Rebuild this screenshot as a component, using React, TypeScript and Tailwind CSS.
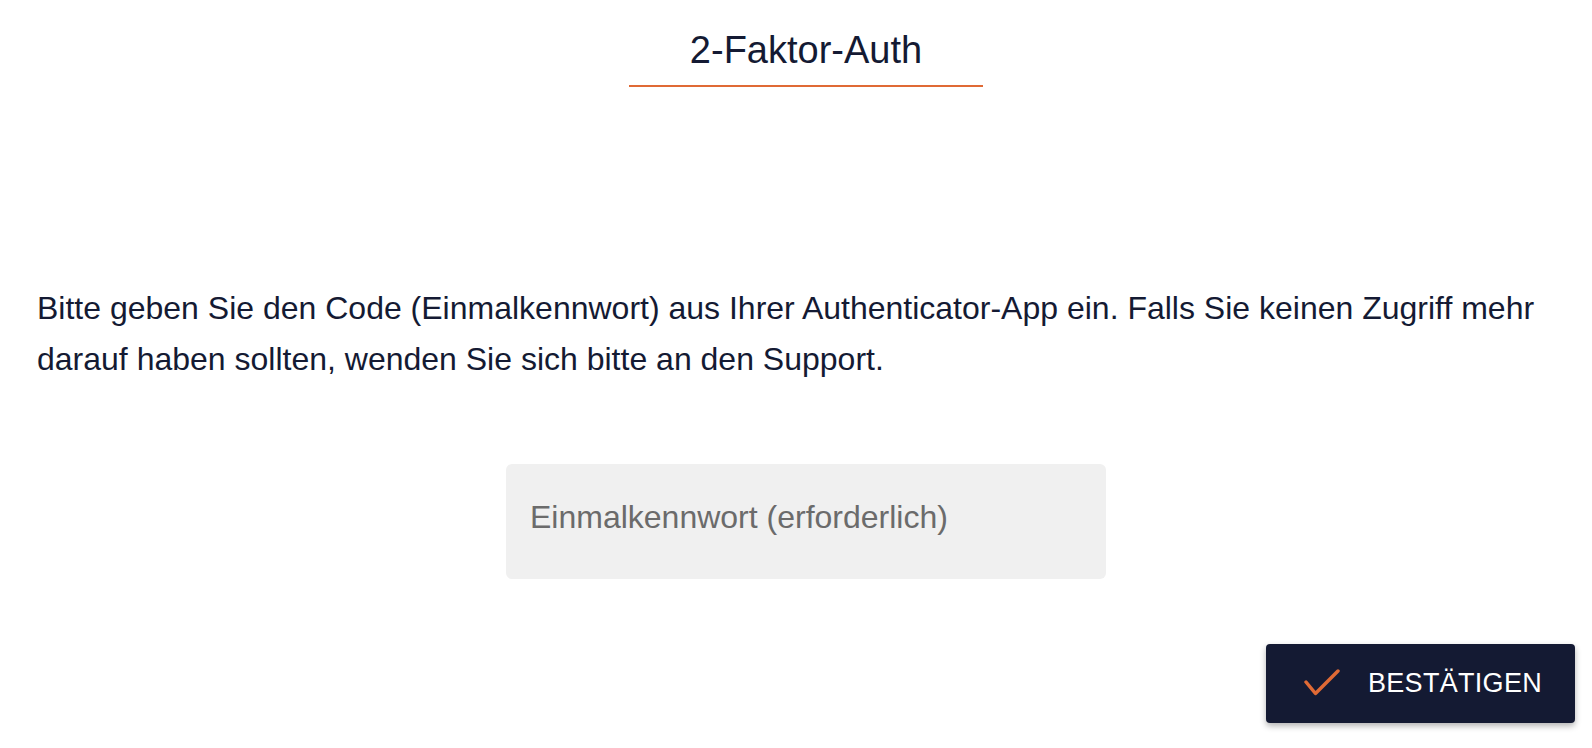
import React, { useState } from 'react';

const TwoFactorPage: React.FC = () => {
  const [code, setCode] = useState('');

  const handleConfirm = (e: React.FormEvent) => {
    e.preventDefault();
    // Verification will be implemented here
  };

  return (
    <div
      className="min-h-[748px] bg-white pl-[37px] pr-[17px] text-[#141a33]"
      style={{ fontFamily: '"Liberation Sans", Arial, Helvetica, sans-serif' }}
    >
      <div className="flex flex-col items-center pt-[27px]">
        <h1 className="text-[38px] leading-[46px] font-normal">2-Faktor-Auth</h1>
        <div className="mt-[12px] h-[2px] w-[354px] bg-[#e06a35]" />
      </div>

      <p className="mt-[196px] text-[32px] leading-[51px]">
        Bitte geben Sie den Code (Einmalkennwort) aus Ihrer Authenticator-App ein. Falls Sie keinen Zugriff mehr
        darauf haben sollten, wenden Sie sich bitte an den Support.
      </p>

      <form onSubmit={handleConfirm}>
        <div className="mt-[79px] flex justify-center">
          <input
            type="text"
            value={code}
            onChange={(e) => setCode(e.target.value)}
            placeholder="Einmalkennwort (erforderlich)"
            className="h-[115px] w-[600px] rounded-[6px] bg-[#f0f0f0] px-[24px] pb-[9px] text-[32px] text-[#141a33] outline-none placeholder:text-[#6b6b6b]"
          />
        </div>

        <div className="mt-[65px] flex justify-end">
          <button
            type="submit"
            className="flex h-[79px] w-[309px] items-center rounded-[4px] bg-[#141a33] pl-[38px] pr-[33px] text-white shadow-[0_3px_6px_rgba(0,0,0,0.3)]"
          >
            <svg width="36" height="29" viewBox="0 0 36 29" fill="none">
              <path d="M2 13 L11.5 24.5 L34 2" stroke="#e06a35" strokeWidth="3.5" strokeLinecap="round" strokeLinejoin="round" />
            </svg>
            <span className="ml-[28px] text-[27px] leading-none tracking-[0.3px]">BESTÄTIGEN</span>
          </button>
        </div>
      </form>
    </div>
  );
};

export default TwoFactorPage;
